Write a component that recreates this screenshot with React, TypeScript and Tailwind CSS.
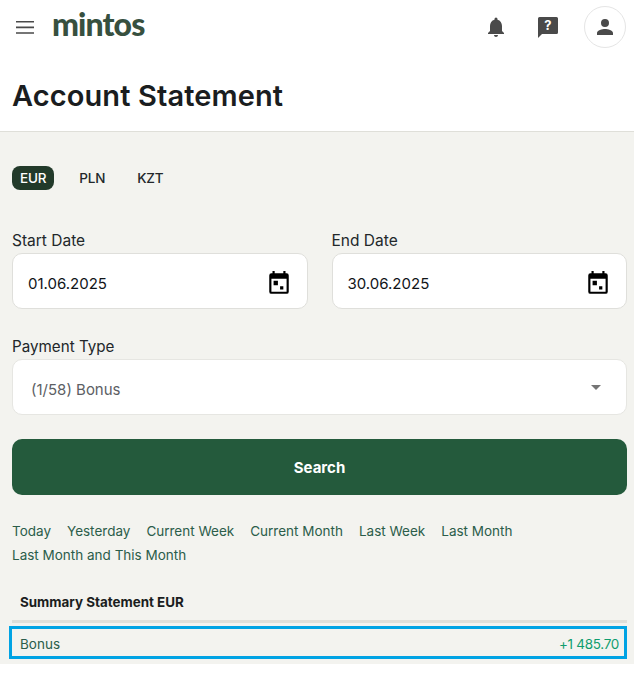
const periods = ["Today", "Yesterday", "Current Week", "Current Month", "Last Week", "Last Month", "Last Month and This Month"]

function CalendarIcon() {
  return (
    <svg width="26" height="26" viewBox="0 0 24 24" className="mt-[4px] text-black" fill="currentColor">
      <path d="M19 3h-1V1h-2v2H8V1H6v2H5a2 2 0 0 0-2 2v15a2 2 0 0 0 2 2h14a2 2 0 0 0 2-2V5a2 2 0 0 0-2-2Zm0 17H5V8h14v12Z" />
      <path d="M7 10h4v4H7zM13 15h3v3h-3z" />
    </svg>
  )
}

function DateField({ label, value }: { label: string; value: string }) {
  return (
    <div className="flex-1">
      <div className="h-[23px] text-[15.5px] leading-[22px] text-[#22272a]">{label}</div>
      <div className="flex h-[56px] items-center justify-between rounded-[10px] border border-[#dfdfdb] bg-white pl-[15px] pr-[15px]">
        <span className="pt-[7px] text-[15px] text-[#101418]">{value}</span>
        <CalendarIcon />
      </div>
    </div>
  )
}

export default function App() {
  return (
    <div className="h-[682px] w-[634px] overflow-hidden bg-white font-['Inter',sans-serif]">
      <header className="flex h-[54px] items-center pl-[16px] pr-[8px]">
        <svg width="18" height="13" viewBox="0 0 18 13" fill="#4a4a4a" className="mt-[1px]">
          <path d="M0 0h18v1.600H0zM0 5.600h18v1.600H0zM0 11.200h18v1.600H0z" />
        </svg>
        <span className="ml-[18px] mt-[-6px] font-['Lato',sans-serif] text-[32px] font-black leading-none tracking-[-0.9px] text-[#37503f]">
          mintos
        </span>
        <div className="ml-auto flex items-center">
          <svg width="24" height="24" viewBox="0 0 24 24" fill="#4a4a4a" className="mr-[28px]">
            <path d="M12 22c1.100 0 2-.9 2-2h-4c0 1.100.9 2 2 2Zm6-6v-5c0-3.070-1.630-5.640-4.500-6.320V4a1.500 1.500 0 0 0-3 0v.68C7.640 5.360 6 7.920 6 11v5l-2 2v1h16v-1l-2-2Z" />
          </svg>
          <svg width="24" height="24" viewBox="0 0 24 24" className="mr-[24px]">
            <path fill="#4a4a4a" d="M3.500 2h17A1.500 1.500 0 0 1 22 3.500v14a1.500 1.500 0 0 1-1.500 1.500H6l-4 4V3.500A1.500 1.500 0 0 1 3.500 2Z" />
            <text x="12" y="15" textAnchor="middle" fill="#fff" fontSize="13" fontWeight="700" fontFamily="Inter, sans-serif">?</text>
          </svg>
          <div className="flex h-[42px] w-[42px] items-center justify-center rounded-full border border-[#e5e5e5] bg-white">
            <svg width="24" height="24" viewBox="0 0 24 24" fill="#4a4a4a">
              <path d="M12 12a4 4 0 1 0 0-8 4 4 0 0 0 0 8Zm0 2c-2.670 0-8 1.340-8 4v2h16v-2c0-2.660-5.330-4-8-4Z" />
            </svg>
          </div>
        </div>
      </header>

      <div className="flex h-[78px] items-start border-b border-[#dfdfd9] px-[12px] pt-[24px]">
        <h1 className="text-[29px] font-semibold leading-[36px] tracking-[0.1px] text-[#1a1d20]">Account Statement</h1>
      </div>

      <main className="h-[532px] bg-[#f3f3ef] pt-[34px]">
        <div className="flex items-center px-[12px] text-[13.5px] font-medium tracking-[-0.2px]">
          <span className="rounded-[8px] bg-[#223a2a] px-[8px] py-[2px] leading-[20px] text-white">EUR</span>
          <span className="ml-[25px] text-[#22272a]">PLN</span>
          <span className="ml-[32px] text-[#22272a]">KZT</span>
        </div>

        <div className="mt-[40px] flex gap-[24px] pl-[12px] pr-[7px]">
          <DateField label="Start Date" value="01.06.2025" />
          <DateField label="End Date" value="30.06.2025" />
        </div>

        <div className="mt-[26px] pl-[12px] pr-[7px]">
          <div className="h-[24px] text-[15.2px] leading-[24px] text-[#22272a]">Payment Type</div>
          <div className="flex h-[56px] items-center justify-between rounded-[10px] border border-[#e6e6e2] bg-white pl-[18px] pr-[25px]">
            <span className="pt-[7px] text-[15px] text-[#5c6064]">(1/58) Bonus</span>
            <span className="h-0 w-0 border-x-[5px] border-t-[5px] border-x-transparent border-t-[#757575]" />
          </div>
        </div>

        <button className="mx-[12px] mt-[24px] flex h-[56px] w-[615px] items-center justify-center rounded-[10px] bg-[#245a3c] pt-[2px] text-[15px] font-bold text-white">
          Search
        </button>

        <div className="mt-[24px] flex flex-wrap gap-x-[16px] px-[12px] text-[13.5px] leading-[24px] text-[#2b5d4a]">
          {periods.map((period) => (
            <span key={period}>{period}</span>
          ))}
        </div>

        <div className="mt-[23px] pl-[12px] pr-[7px]">
          <div className="border-b-[3px] border-[#dfdfd9] px-[8px] pb-[6px] text-[13.4px] font-bold leading-[24px] text-[#1a1d20]">
            Summary Statement EUR
          </div>
        </div>
        <div className="ml-[9px] mt-[3px] flex h-[33px] w-[618px] items-center justify-between border-[3px] border-[#00a3e4] pl-[8px] pr-[5px] pt-[3px] text-[13.5px]">
          <span className="text-[#2b5d4a]">Bonus</span>
          <span className="tracking-[-0.3px] text-[#0f9d6e]">+1 485.70</span>
        </div>
      </main>
    </div>
  )
}
